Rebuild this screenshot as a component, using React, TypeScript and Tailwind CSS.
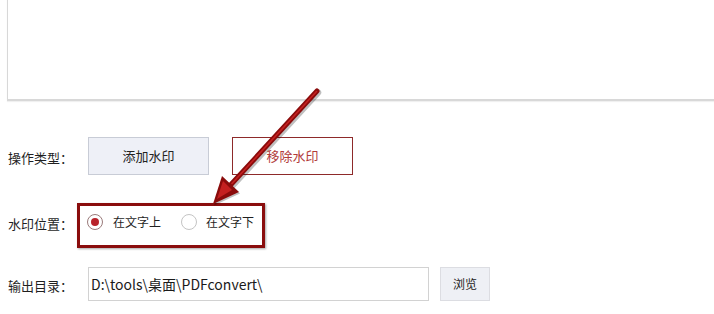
import React from "react";

const font = { fontFamily: '"Noto Sans CJK SC", "Noto Sans", sans-serif' };

export default function App() {
  return (
    <div
      className="relative w-[714px] h-[314px] overflow-hidden bg-white text-[#1f1f1f]"
      style={font}
    >
      {/* top text box */}
      <div className="ml-[7px] -mt-[2px] h-[103px] border-l border-b-2 border-l-[#d8d8d8] border-b-[#d8d8d8] bg-white shadow-[0_1px_1px_#f0f0f0]" />

      {/* 操作类型 */}
      <div className="mt-[36px] flex h-[38px] items-center">
        <div className="w-[88px] pl-[8px] pt-[3px] text-[13px] leading-none">操作类型：</div>
        <button className="h-[38px] w-[121px] border border-[#c8ccd6] bg-[#eef0f7] text-[13px] text-[#222]">
          添加水印
        </button>
        <button className="ml-[23px] h-[38px] w-[121px] border border-[#8e2a2a] bg-white text-[13px] text-[#b23a3a]">
          移除水印
        </button>
      </div>

      {/* 水印位置 */}
      <div className="mt-[28px] flex h-[38px] items-center">
        <div className="w-[87px] pl-[8px] pt-[2px] text-[13px] leading-none">水印位置：</div>
        <span className="flex h-[16px] w-[16px] items-center justify-center rounded-full border border-[#9a7a7a] bg-white">
          <span className="h-[8px] w-[8px] rounded-full bg-[#b8222a]" />
        </span>
        <span className="ml-[10px] text-[12px] leading-none">在文字上</span>
        <span className="ml-[20px] h-[16px] w-[16px] rounded-full border border-[#c4c4c4] bg-white" />
        <span className="ml-[9px] text-[12px] leading-none">在文字下</span>
      </div>

      {/* 输出目录 */}
      <div className="mt-[26px] flex h-[34px] items-center">
        <div className="w-[88px] pl-[8px] pt-[2px] text-[13px] leading-none">输出目录：</div>
        <div className="flex h-[34px] w-[341px] items-center border border-[#d2d2d2] bg-white pl-[2px] text-[14px] text-[#1a1a1a]">
          D:\tools\桌面\PDFconvert\
        </div>
        <button className="ml-[11px] h-[34px] w-[50px] border border-[#dcdde2] bg-[#eef0f5] text-[12px] text-[#222]">
          浏览
        </button>
      </div>

      {/* annotation box */}
      <div className="pointer-events-none absolute left-[77px] top-[203px] h-[45px] w-[188px] border-[3px] border-[#8a0d0d] shadow-[1px_1px_2px_rgba(0,0,0,0.35)]" />

      {/* annotation arrow */}
      <svg
        className="pointer-events-none absolute left-0 top-0"
        width="714"
        height="314"
        viewBox="0 0 714 314"
      >
        <line x1="317" y1="91" x2="231" y2="184.5" stroke="rgba(0,0,0,0.25)" strokeWidth="6.5" strokeLinecap="round" transform="translate(1,1.5)" />
        <polygon points="213,204 239,192 222,176" fill="rgba(0,0,0,0.25)" transform="translate(1,1.5)" />
        <line x1="317" y1="91" x2="231" y2="184.5" stroke="#8a0b0b" strokeWidth="5" strokeLinecap="round" />
        <line x1="316.5" y1="91.5" x2="232" y2="183.5" stroke="#c42020" strokeWidth="1.6" strokeLinecap="round" />
        <polygon points="213,204 239,192 222,176" fill="#8a0b0b" />
        <polygon points="217,199 232,190 223,181" fill="#c42020" />
      </svg>
    </div>
  );
}
